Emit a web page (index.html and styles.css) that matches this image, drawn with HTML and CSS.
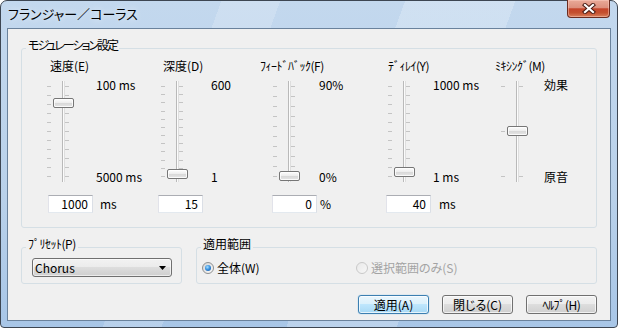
FILE: index.html
```html
<!DOCTYPE html>
<html lang="ja">
<head>
  <meta charset="UTF-8">
  <title>フランジャー／コーラス</title>
  <link rel="stylesheet" href="styles.css">
</head>
<body>
  <div class="window">
    <div class="titlebar">
      <span class="title">フランジャー／コーラス</span>
      <div class="close-btn">
        <svg width="14" height="11" viewBox="0 0 14 11">
          <path d="M3 2 L11 9 M11 2 L3 9" stroke="#4a1c14" stroke-width="4.2" stroke-linecap="square"/>
          <path d="M3 2 L11 9 M11 2 L3 9" stroke="#fff" stroke-width="2.2" stroke-linecap="square"/>
        </svg>
      </div>
    </div>

    <div class="client">
      <fieldset class="group group-mod">
        <legend class="narrow">モジュレーション設定</legend>
        <div class="sliders">
          <div class="slider-col col-speed">
            <div class="slider-label">速度(E)</div>
            <div class="slider-row">
              <div class="slider" data-ticks="11">
                <div class="ticks"></div>
                <div class="groove"></div>
                <div class="ticks"></div>
                <div class="thumb" style="top: 17px"></div>
              </div>
              <div class="scale"><span>100 ms</span><span>5000 ms</span></div>
            </div>
            <div class="value-row">
              <div class="textbox">1000</div><span class="unit">ms</span>
            </div>
          </div>

          <div class="slider-col col-depth">
            <div class="slider-label">深度(D)</div>
            <div class="slider-row">
              <div class="slider" data-ticks="12">
                <div class="ticks"></div>
                <div class="groove"></div>
                <div class="ticks"></div>
                <div class="thumb" style="top: 88px"></div>
              </div>
              <div class="scale"><span>600</span><span>1</span></div>
            </div>
            <div class="value-row">
              <div class="textbox">15</div>
            </div>
          </div>

          <div class="slider-col col-feedback">
            <div class="slider-label hw">ﾌｨｰﾄﾞﾊﾞｯｸ(F)</div>
            <div class="slider-row">
              <div class="slider" data-ticks="10">
                <div class="ticks"></div>
                <div class="groove"></div>
                <div class="ticks"></div>
                <div class="thumb" style="top: 90px"></div>
              </div>
              <div class="scale"><span>90%</span><span>0%</span></div>
            </div>
            <div class="value-row">
              <div class="textbox">0</div><span class="unit">%</span>
            </div>
          </div>

          <div class="slider-col col-delay">
            <div class="slider-label hw">ﾃﾞｨﾚｲ(Y)</div>
            <div class="slider-row">
              <div class="slider" data-ticks="11">
                <div class="ticks"></div>
                <div class="groove"></div>
                <div class="ticks"></div>
                <div class="thumb" style="top: 86px"></div>
              </div>
              <div class="scale"><span>1000 ms</span><span>1 ms</span></div>
            </div>
            <div class="value-row">
              <div class="textbox">40</div><span class="unit">ms</span>
            </div>
          </div>

          <div class="slider-col col-mix">
            <div class="slider-label hw">ﾐｷｼﾝｸﾞ(M)</div>
            <div class="slider-row">
              <div class="slider" data-ticks="3">
                <div class="ticks"></div>
                <div class="groove"></div>
                <div class="ticks"></div>
                <div class="thumb" style="top: 45px"></div>
              </div>
              <div class="scale"><span>効果</span><span>原音</span></div>
            </div>
          </div>
        </div>
      </fieldset>

      <div class="bottom-groups">
        <fieldset class="group group-preset">
          <legend class="hw">ﾌﾟﾘｾｯﾄ(P)</legend>
          <div class="combo">
            <span>Chorus</span>
            <svg width="7" height="4" viewBox="0 0 7 4"><path d="M0 0 H7 L3.5 4 Z" fill="#000"/></svg>
          </div>
        </fieldset>

        <fieldset class="group group-range">
          <legend>適用範囲</legend>
          <div class="radio-row">
            <label class="radio-item">
              <span class="radio checked"><span class="dot"></span></span>全体(W)
            </label>
            <label class="radio-item disabled">
              <span class="radio"></span>選択範囲のみ(S)
            </label>
          </div>
        </fieldset>
      </div>

      <div class="buttons">
        <button class="btn btn-default">適用(A)</button>
        <button class="btn">閉じる(C)</button>
        <button class="btn hw">ﾍﾙﾌﾟ(H)</button>
      </div>
    </div>
  </div>

  <script>
    document.querySelectorAll('.slider').forEach(slider => {
      const n = +slider.dataset.ticks;
      slider.querySelectorAll('.ticks').forEach(col => {
        col.innerHTML = '<i></i>'.repeat(n);
      });
    });
  </script>
</body>
</html>
```

FILE: styles.css
```css
* {
    box-sizing: border-box;
}

body {
    margin: 0;
    font-family: 'Noto Sans CJK JP', sans-serif;
    font-size: 12px;
    font-feature-settings: "palt";
    color: #000;
    background: #fff;
}

.hw {
    letter-spacing: -0.5px;
}

.group legend.narrow {
    letter-spacing: -2px;
}

/* window frame */
.window {
    width: 618px;
    height: 328px;
    display: flex;
    flex-direction: column;
    padding: 0 6px 6px;
    border: 1px solid #3d4652;
    border-radius: 7px 7px 4px 4px;
    background:
        linear-gradient(110deg, transparent 0 30%, rgba(255, 255, 255, 0.18) 30% 38%, transparent 38% 55%, rgba(255, 255, 255, 0.22) 55% 70%, transparent 70%),
        linear-gradient(to bottom, #c3d8ee 0%, #b9d1ea 60%, #a8c6e7 100%);
}

.titlebar {
    height: 27px;
    display: flex;
    align-items: flex-start;
    padding: 0 1px;
}

.title {
    margin-top: 5px;
    font-size: 13px;
    line-height: 16px;
    text-shadow: 0 0 6px rgba(255, 255, 255, 0.9);
}

.close-btn {
    margin-left: auto;
    margin-top: -1px;
    width: 43px;
    height: 18px;
    display: flex;
    justify-content: center;
    align-items: center;
    border: 1px solid #6b2c20;
    border-top: none;
    border-radius: 0 0 4px 4px;
    background: linear-gradient(to bottom, #e9aa99 0%, #dd907d 45%, #c5452b 52%, #c4502f 75%, #d9805c 100%);
    box-shadow: inset 0 0 0 1px rgba(255, 210, 200, 0.45);
}

.client {
    flex: 1;
    display: flex;
    flex-direction: column;
    padding: 0 13px;
    background: #f0f0f0;
    border: 1px solid #6a829c;
}

/* group boxes */
.group {
    margin: 9px 0 0;
    padding: 0;
    min-width: 0;
    border: 1px solid #d5dfe5;
    border-radius: 3px;
}

.group legend {
    margin-left: 4px;
    padding: 0 2px 7px;
    line-height: 14px;
}

.sliders {
    display: grid;
    grid-template-columns: 114px 112px 115px 113px 1fr;
    padding: 1px 0 14px 25px;
}

.col-speed    { --label-x: 3px;   --scale-x: 17px; --input-x: 1px;  --unit-x: 7px; }
.col-depth    { --label-x: 2px;   --scale-x: 18px; --input-x: -3px; --unit-x: 0px; }
.col-feedback { --label-x: -13px; --scale-x: 14px; --input-x: -1px; --unit-x: 3px; }
.col-delay    { --label-x: 0px;   --scale-x: 13px; --input-x: -2px; --unit-x: 8px; }
.col-mix      { --label-x: -6px;  --scale-x: 11px; }

.slider-label {
    margin-left: var(--label-x);
    line-height: 12px;
    white-space: nowrap;
}

.slider-row {
    display: flex;
    margin-top: 9px;
}

.slider {
    position: relative;
    width: 32px;
    height: 101px;
    display: flex;
}

.ticks {
    width: 4px;
    height: 100%;
    padding: 5px 0;
    display: flex;
    flex-direction: column;
    justify-content: space-between;
}

.ticks i {
    display: block;
    height: 1px;
    background: #c4c4c4;
}

.ticks:last-of-type {
    margin-left: auto;
}

.groove {
    width: 3px;
    height: 100%;
    margin-left: 11px;
    background: #fbfbfb;
    border-left: 1px solid #b9b9b9;
    border-right: 1px solid #dedede;
}

.thumb {
    position: absolute;
    left: 6px;
    width: 21px;
    height: 10px;
    border: 1px solid #767676;
    border-radius: 2px;
    background: linear-gradient(to bottom, #fdfdfd 0%, #eeeeee 45%, #d9d9d9 55%, #e6e6e6 100%);
    box-shadow: inset 0 0 0 1px rgba(255, 255, 255, 0.8);
}

.scale {
    margin-left: var(--scale-x);
    margin-top: -2px;
    height: 104px;
    display: flex;
    flex-direction: column;
    justify-content: space-between;
    line-height: 12px;
    white-space: nowrap;
}

.value-row {
    display: flex;
    align-items: center;
    margin-top: 12px;
    margin-left: var(--input-x);
}

.textbox {
    width: 45px;
    height: 18px;
    padding-right: 4px;
    line-height: 16px;
    text-align: right;
    background: #fff;
    border: 1px solid;
    border-color: #abadb3 #dbdfe6 #e3e9ef #e2e3ea;
}

.unit {
    margin-left: var(--unit-x);
    line-height: 12px;
}

/* lower area */
.bottom-groups {
    display: flex;
    gap: 14px;
    margin-top: 9px;
}

.bottom-groups .group {
    margin-top: 0;
    padding-bottom: 6px;
}

.group-preset {
    width: 161px;
}

.group-range {
    flex: 1;
}

.combo {
    width: 140px;
    height: 19px;
    margin-left: 10px;
    padding: 0 5px 0 2px;
    display: flex;
    align-items: center;
    justify-content: space-between;
    border: 1px solid #707070;
    border-radius: 3px;
    background: linear-gradient(to bottom, #f2f2f2 0%, #ebebeb 50%, #dddddd 50%, #cfcfcf 100%);
    box-shadow: inset 0 0 0 1px rgba(255, 255, 255, 0.6);
}

.radio-row {
    height: 19px;
    display: flex;
    align-items: center;
    padding-left: 5px;
}

.radio-item {
    display: flex;
    align-items: center;
    gap: 3px;
    white-space: nowrap;
}

.radio-item:first-child {
    width: 154px;
}

.radio-item.disabled {
    color: #a3a3a3;
}

.radio {
    width: 12px;
    height: 12px;
    display: flex;
    justify-content: center;
    align-items: center;
    border: 1px solid #8e8f8f;
    border-radius: 50%;
    background: linear-gradient(135deg, #d4d5d6, #fafafa);
}

.disabled .radio {
    border-color: #c9c9c9;
    background: linear-gradient(135deg, #e9e9e9, #f7f7f7);
}

.dot {
    width: 6px;
    height: 6px;
    border-radius: 50%;
    background: radial-gradient(circle at 40% 35%, #a8e0ff 0%, #3a93e0 45%, #0f4c9c 100%);
}

.buttons {
    display: flex;
    justify-content: flex-end;
    gap: 13px;
    margin-top: 11px;
}

.btn {
    width: 71px;
    height: 19px;
    padding: 0;
    font: inherit;
    line-height: 16px;
    color: #000;
    border: 1px solid #707070;
    border-radius: 3px;
    background: linear-gradient(to bottom, #f2f2f2 0%, #ebebeb 50%, #dddddd 50%, #cfcfcf 100%);
    box-shadow: inset 0 0 0 1px rgba(255, 255, 255, 0.7);
}

.btn-default {
    border-color: #3c7fb1;
    background: linear-gradient(to bottom, #eaf6fd 0%, #d9f0fc 50%, #bee6fd 50%, #a7d9f5 100%);
    box-shadow: inset 0 0 0 1px rgba(255, 255, 255, 0.7), 0 0 1px #48a8e8;
}
```
